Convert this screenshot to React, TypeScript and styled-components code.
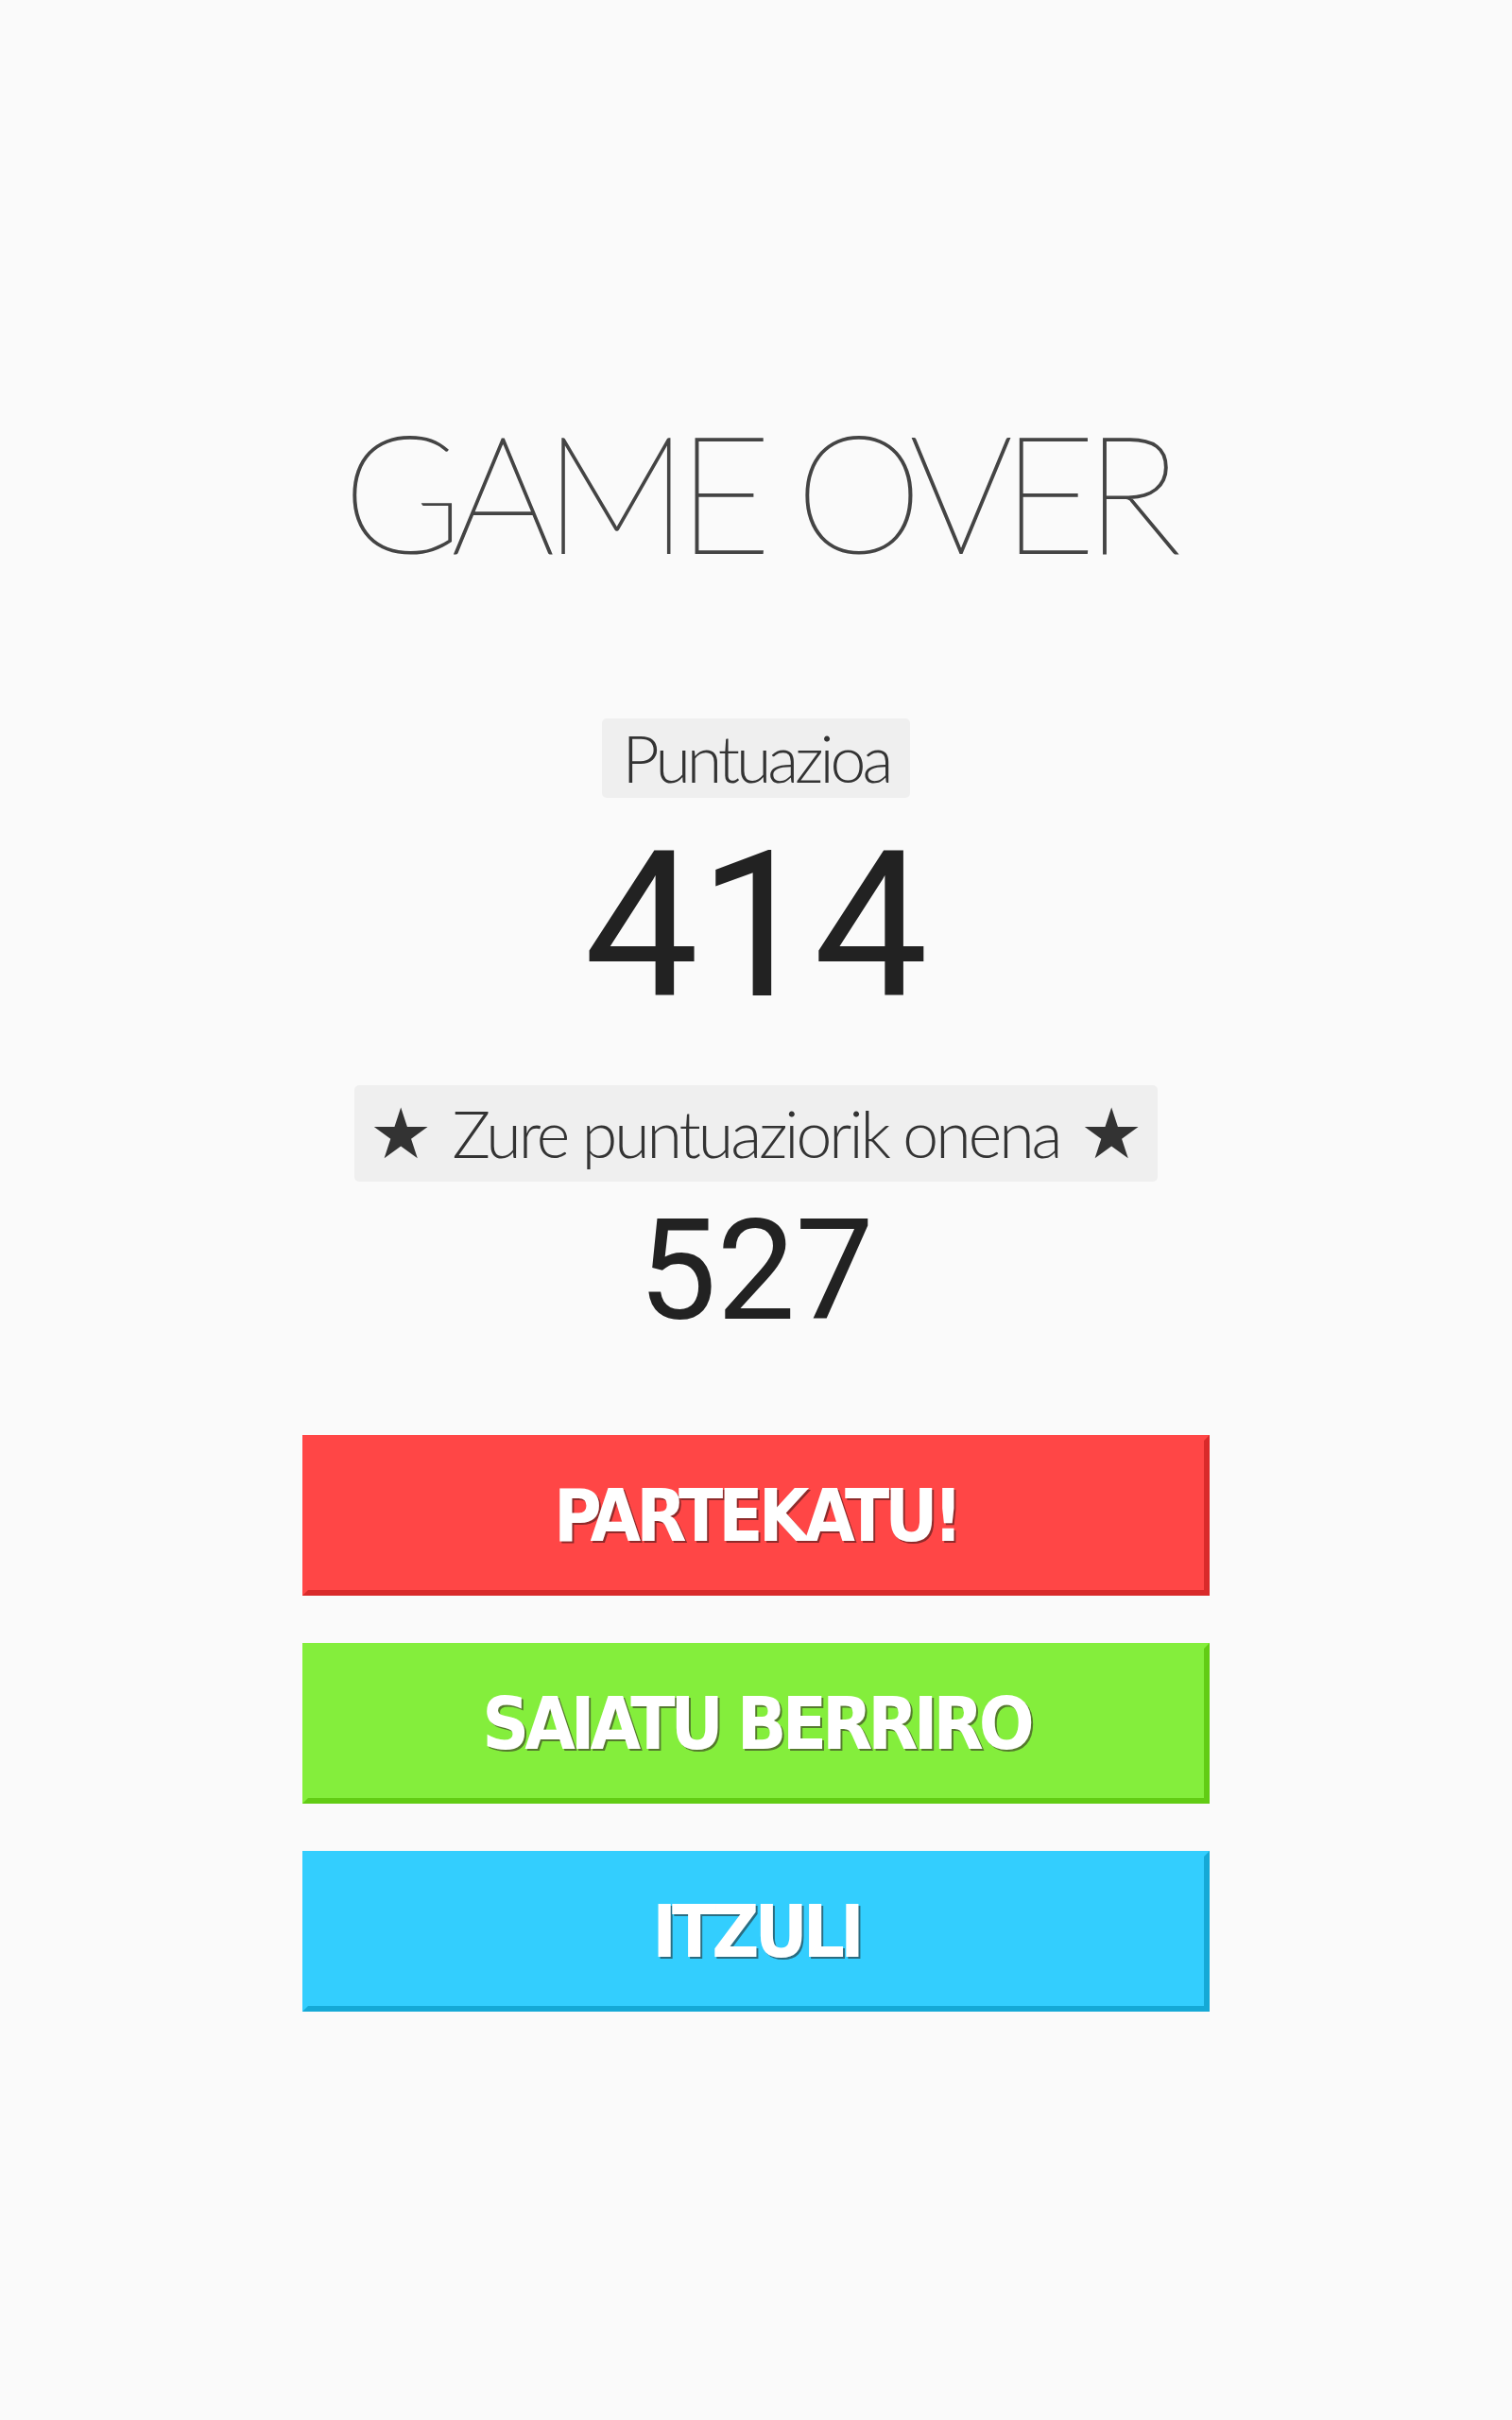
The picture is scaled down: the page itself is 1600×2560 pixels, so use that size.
import React from "react";
import styled, { createGlobalStyle } from "styled-components";

const GlobalStyle = createGlobalStyle`
  html, body {
    margin: 0;
    padding: 0;
    background: #fafafa;
  }
  body {
    font-family: "Lato", "Roboto", sans-serif;
  }
`;

const Page = styled.main`
  min-height: 2560px;
  box-sizing: border-box;
  padding-top: 433px;
  display: flex;
  flex-direction: column;
  align-items: center;
  background: #fafafa;
`;

const Title = styled.h1`
  margin: 0;
  font-family: "Lato", sans-serif;
  font-weight: 100;
  font-size: 172px;
  line-height: 1;
  letter-spacing: -12px;
  color: #444444;
  -webkit-text-stroke: 1.8px #444444;
  white-space: nowrap;
`;

const Label = styled.div<{ $padY: number; $padX: number; $size: number; $spacing: number; $top: number }>`
  margin-top: ${(p) => p.$top}px;
  display: flex;
  align-items: center;
  gap: 22px;
  padding: ${(p) => p.$padY}px ${(p) => p.$padX}px;
  background: #efefef;
  border-radius: 5px;
  font-family: "Lato", sans-serif;
  font-weight: 300;
  font-size: ${(p) => p.$size}px;
  line-height: 1;
  letter-spacing: ${(p) => p.$spacing}px;
  color: #333333;
  white-space: nowrap;
`;

const Star = styled.span`
  font-family: "DejaVu Sans", sans-serif;
  font-size: 74px;
  line-height: 1;
  letter-spacing: 0;
  color: #333333;
`;

const Score = styled.div<{ $size: number; $top: number }>`
  margin-top: ${(p) => p.$top}px;
  font-family: "Roboto", sans-serif;
  font-weight: 400;
  font-size: ${(p) => p.$size}px;
  line-height: 1;
  color: #222222;
`;

const Buttons = styled.div`
  margin-top: 99px;
  width: 960px;
  display: flex;
  flex-direction: column;
  gap: 50px;
`;

const ActionButton = styled.button<{ $bg: string; $edge: string; $shadow: string }>`
  box-sizing: border-box;
  width: 960px;
  height: 170px;
  margin: 0;
  padding: 0;
  border-style: solid;
  border-width: 6px;
  border-color: ${(p) => p.$bg} ${(p) => p.$edge} ${(p) => p.$edge} ${(p) => p.$bg};
  border-radius: 0;
  background: ${(p) => p.$bg};
  color: #ffffff;
  font-family: "Liberation Sans Narrow", "DejaVu Sans Condensed", "Liberation Sans", sans-serif;
  font-weight: 700;
  font-size: 77px;
  line-height: 1;
  letter-spacing: -5px;
  text-shadow: 2px 2px 0 ${(p) => p.$shadow};
  cursor: pointer;
  display: flex;
  align-items: center;
  justify-content: center;
`;

export default function App() {
  return (
    <>
      <GlobalStyle />
      <Page>
        <Title>GAME OVER</Title>
        <Label $top={155} $padY={8} $padX={22} $size={68} $spacing={-4}>
          Puntuazioa
        </Label>
        <Score $size={216} $top={28}>414</Score>
        <Label $top={60} $padY={14} $padX={16} $size={68} $spacing={-3}>
          <Star>★</Star>
          <span>Zure puntuaziorik onena</span>
          <Star>★</Star>
        </Label>
        <Score $size={148} $top={21}>527</Score>
        <Buttons>
          <ActionButton $bg="#ff4646" $edge="#d92a2a" $shadow="#8e2b2b">
            PARTEKATU!
          </ActionButton>
          <ActionButton $bg="#84ee3c" $edge="#62cc14" $shadow="#557a2e">
            SAIATU BERRIRO
          </ActionButton>
          <ActionButton $bg="#33cefe" $edge="#15a9d6" $shadow="#2a6d82">
            ITZULI
          </ActionButton>
        </Buttons>
      </Page>
    </>
  );
}
